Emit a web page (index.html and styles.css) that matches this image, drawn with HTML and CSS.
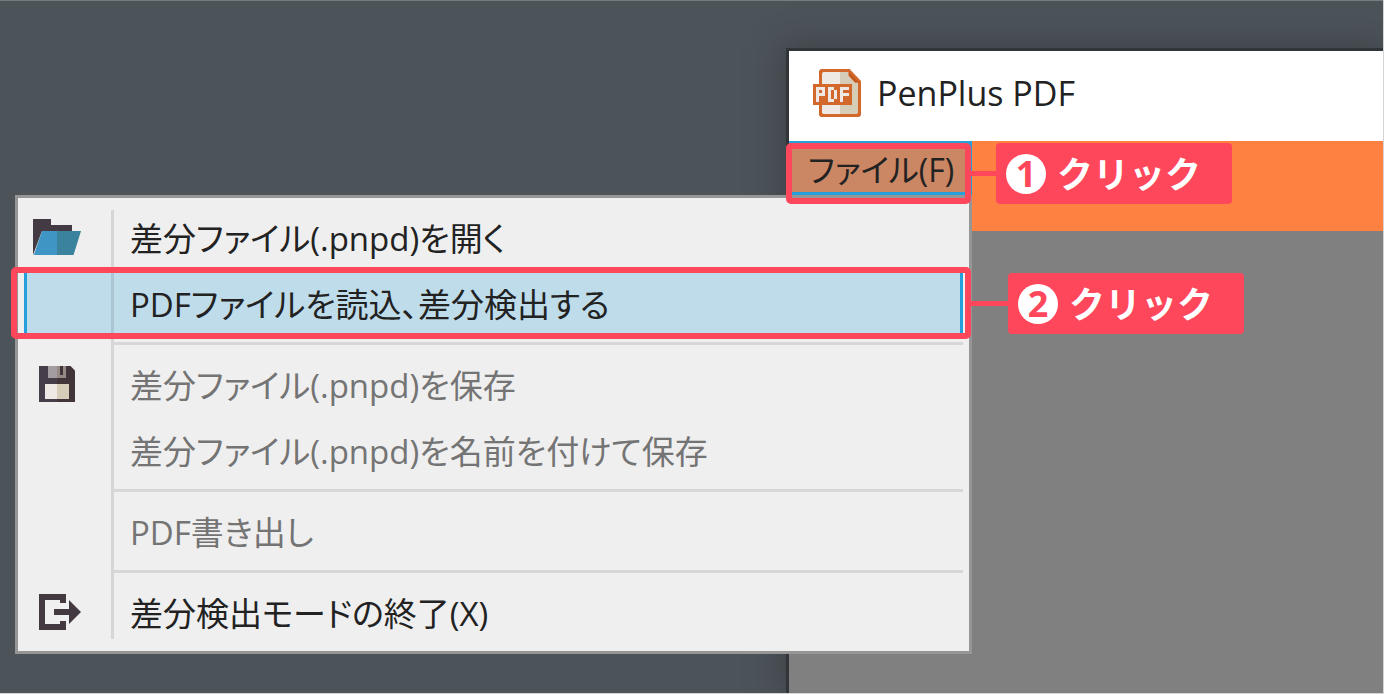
FILE: index.html
```html
<!DOCTYPE html>
<html lang="ja">
<head>
<meta charset="utf-8">
<title>PenPlus PDF</title>
<link rel="stylesheet" href="styles.css">
</head>
<body>
<div class="desktop">
  <main class="window">
    <header class="titlebar">
      <svg class="app-icon" viewBox="0 0 16 16" aria-hidden="true">
        <path fill="#d2682c" d="M2.6 0H12.2L16 4v11.4l-.6.6H2.6L2 15.4V.6z"/>
        <path fill="#efe9e6" d="M3 1.4L3.4 1H9v14H3.4L3 14.6z"/>
        <path fill="#d6cdb9" d="M9 1h2.8v1.2L14 4.6h1v10L14.6 15H9z"/>
        <path fill="#c25a20" d="M12 1l3.2 3.4h-1L12 2.2z"/>
        <g shape-rendering="crispEdges">
          <path fill="#d2682c" d="M0 5h13v7H0z"/>
          <path fill="#efe9e6" d="M1 6h3v3H2v2H1zM5 6h2v1h1v3H7v1H5zM9 6h3v1h-2v1h2v1h-2v2H9z"/>
          <path fill="#d2682c" d="M2 7h1v1H2zM6 7h1v3H6z"/>
        </g>
      </svg>
      <h1 class="title">PenPlus PDF</h1>
    </header>
    <nav class="menubar">
      <button class="menubar-item" type="button" aria-haspopup="true" aria-expanded="true">ファイル(F)</button>
      <div class="menu" role="menu">
        <button class="menu-item" type="button" role="menuitem">
          <svg class="icon folder" viewBox="0 0 16 12" aria-hidden="true">
            <path fill="#433a43" d="M0 0h6v2h7v2H3L0 12z"/>
            <path fill="#3f96c4" d="M3 4h5v8H.3z"/>
            <path fill="#3a829d" d="M8 4h8l-2.5 8H8z"/>
          </svg>
          <span>差分ファイル(.pnpd)を開く</span>
        </button>
        <button class="menu-item active" type="button" role="menuitem">
          <span>PDFファイルを読込、差分検出する</span>
        </button>
        <hr class="separator">
        <button class="menu-item" type="button" role="menuitem" disabled>
          <svg class="icon floppy" viewBox="0 0 12 12" aria-hidden="true">
            <path fill="#463f49" d="M0 0h6v12H0z"/>
            <path fill="#41353a" d="M6 0h4.5L12 1.5V12H6z"/>
            <path fill="#a39da2" d="M3 0h3v4H3z"/>
            <path fill="#958b84" d="M6 0h3v4H6z"/>
            <path fill="#41353a" d="M7 0h1v3H7z"/>
            <path fill="#efe9e5" d="M2 6h4v5H2z"/>
            <path fill="#d6cdb9" d="M6 6h4v5H6z"/>
          </svg>
          <span>差分ファイル(.pnpd)を保存</span>
        </button>
        <button class="menu-item" type="button" role="menuitem" disabled>
          <span>差分ファイル(.pnpd)を名前を付けて保存</span>
        </button>
        <hr class="separator">
        <button class="menu-item" type="button" role="menuitem" disabled>
          <span>PDF書き出し</span>
        </button>
        <hr class="separator">
        <button class="menu-item" type="button" role="menuitem">
          <svg class="icon exit" viewBox="0 0 14 12" aria-hidden="true">
            <path fill="#433a41" d="M0 0h9v3H7V2H2v8h5V9h2v3H0z"/>
            <path fill="#433a41" d="M5 5h5V2l4 4-4 4V7H5z"/>
          </svg>
          <span>差分検出モードの終了(X)</span>
        </button>
      </div>
    </nav>
  </main>
  <div class="frame frame-file"></div>
  <div class="callout callout-file"><span class="step">1</span><span>クリック</span></div>
  <div class="frame frame-load"></div>
  <div class="callout callout-load"><span class="step">2</span><span>クリック</span></div>
</div>
</body>
</html>
```
FILE: styles.css
```css
* {
  box-sizing: border-box;
}

body {
  margin: 0;
  background: #dcdcdc;
  font-family: "Open Sans", "Noto Sans CJK JP", sans-serif;
}

.desktop {
  position: relative;
  height: 100vh;
  overflow: hidden;
  background: #4c5359;
  border: solid #d4d4d4;
  border-width: 0 1px 1px 0;
  box-shadow: inset 0 1px #727d80;
}

.window {
  position: absolute;
  left: 786px;
  top: 48px;
  right: 0;
  bottom: 0;
  display: flex;
  flex-direction: column;
  background: #808080;
  border: solid #323537;
  border-width: 3px 0 0 3px;
  box-shadow: 0 0 30px rgba(40, 44, 44, 0.5);
}

.titlebar {
  display: flex;
  align-items: center;
  gap: 16px;
  height: 90px;
  padding: 0 24px 6px;
  background: #fff;
}

.app-icon {
  width: 48px;
  height: 48px;
}

.title {
  margin: 0;
  color: #222;
  font-size: 34px;
  font-weight: 400;
}

.menubar {
  position: relative;
  height: 90px;
  background: #ff8142;
}

.menubar-item {
  width: 183px;
  height: 54px;
  padding: 2px 0 0 16px;
  border: 3px solid #26a0da;
  background: #cb8664;
  color: #222;
  font: 32px/48px "Open Sans", "Noto Sans CJK JP", sans-serif;
  font-feature-settings: "palt";
  text-align: left;
  white-space: nowrap;
}

.menu {
  position: absolute;
  top: 54px;
  left: -774px;
  width: 957px;
  padding: 8px 6px 4px;
  border: 3px solid #969696;
  background: #efefef;
}

.menu::before {
  content: "";
  position: absolute;
  top: 12px;
  bottom: 12px;
  left: 93px;
  width: 3px;
  background: rgba(0, 0, 0, 0.1);
}

.menu-item {
  display: grid;
  grid-template-columns: 103px 1fr;
  align-items: center;
  width: 100%;
  height: 66px;
  padding: 0;
  border: solid transparent;
  border-width: 0 3px;
  background: none;
  color: #222;
  font: 33px/48px "Open Sans", "Noto Sans CJK JP", sans-serif;
  font-feature-settings: "palt";
  text-align: left;
  white-space: nowrap;
}

.menu-item span {
  grid-column: 2;
}

.menu-item:disabled {
  color: #747474;
}

.menu-item.active {
  border-color: #26a0da;
  background: #bfdcea;
}

.icon {
  height: 36px;
  margin: 0 0 4px 12px;
}

.icon.folder {
  width: 48px;
  margin-left: 6px;
}

.icon.floppy {
  width: 36px;
}

.icon.exit {
  width: 42px;
}

.separator {
  height: 3px;
  margin: 4px 0 8px 90px;
  border: 0;
  background: #d7d7d7;
}

.frame {
  position: absolute;
  border: 6px solid #ff475c;
  border-radius: 5px;
}

.frame-file {
  left: 786px;
  top: 143px;
  width: 185px;
  height: 61px;
}

.frame-load {
  left: 11px;
  top: 267px;
  width: 960px;
  height: 72px;
}

.callout {
  position: absolute;
  display: flex;
  align-items: center;
  gap: 11px;
  width: 236px;
  height: 61px;
  padding-left: 10px;
  border-radius: 4px;
  background: #ff475c;
  color: #fff;
  font: 700 36px/48px "Noto Sans CJK JP", sans-serif;
}

.callout span:last-child {
  padding-bottom: 4px;
}

.callout::before {
  content: "";
  position: absolute;
  right: 100%;
  top: 28px;
  height: 5px;
  background: #ff475c;
}

.callout-file {
  left: 996px;
  top: 143px;
}

.callout-file::before {
  width: 25px;
}

.callout-load {
  left: 1008px;
  top: 273px;
}

.callout-load::before {
  width: 37px;
}

.step {
  width: 40px;
  height: 40px;
  border-radius: 50%;
  background: #fff;
  color: #ff475c;
  font: 700 36px/40px "Open Sans", sans-serif;
  text-align: center;
}
```
